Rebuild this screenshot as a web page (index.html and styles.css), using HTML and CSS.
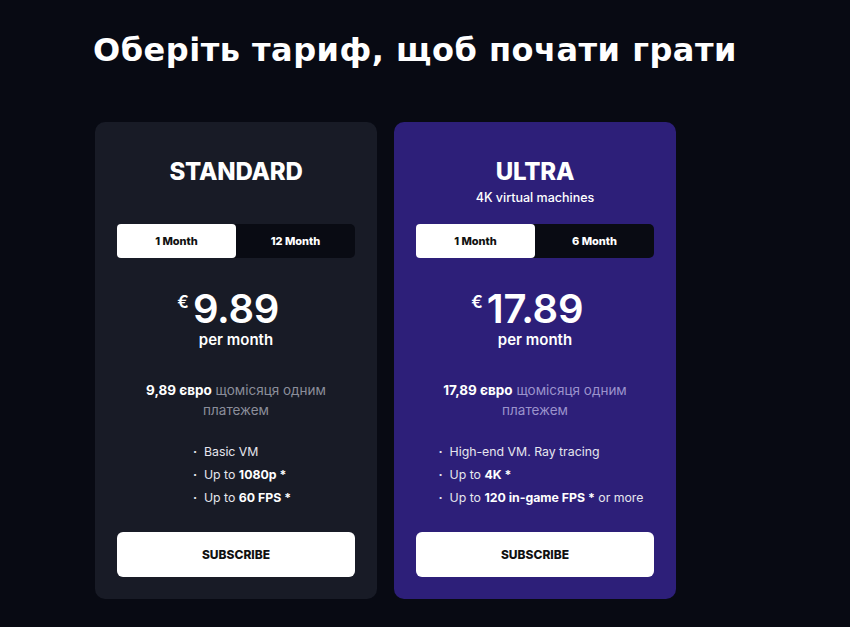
FILE: index.html
```html
<!DOCTYPE html>
<html lang="uk">
<head>
    <meta charset="UTF-8">
    <meta name="viewport" content="width=device-width, initial-scale=1.0">
    <title>Тарифи</title>
    <link rel="stylesheet" href="styles.css">
</head>
<body>
    <div class="page">
        <h1 class="page-title">Оберіть тариф, щоб почати грати</h1>

        <div class="plans">
            <div class="plan">
                <div class="plan-header">
                    <h2>STANDARD</h2>
                </div>

                <div class="period-toggle">
                    <button class="period active">1 Month</button>
                    <button class="period">12 Month</button>
                </div>

                <div class="price"><span class="amount"><span class="currency">€</span>9.89</span></div>
                <div class="price-unit">per month</div>

                <p class="price-note"><b>9,89 євро</b> щомісяця одним платежем</p>

                <ul class="features">
                    <li>Basic VM</li>
                    <li>Up to <b>1080p *</b></li>
                    <li>Up to <b>60 FPS *</b></li>
                </ul>

                <button class="subscribe-btn">SUBSCRIBE</button>
            </div>

            <div class="plan plan-ultra">
                <div class="plan-header">
                    <h2>ULTRA</h2>
                    <p>4K virtual machines</p>
                </div>

                <div class="period-toggle">
                    <button class="period active">1 Month</button>
                    <button class="period">6 Month</button>
                </div>

                <div class="price"><span class="amount"><span class="currency">€</span>17.89</span></div>
                <div class="price-unit">per month</div>

                <p class="price-note"><b>17,89 євро</b> щомісяця одним платежем</p>

                <ul class="features">
                    <li>High-end VM. Ray tracing</li>
                    <li>Up to <b>4K *</b></li>
                    <li>Up to <b>120 in-game FPS *</b> or more</li>
                </ul>

                <button class="subscribe-btn">SUBSCRIBE</button>
            </div>
        </div>
    </div>
</body>
</html>
```

FILE: styles.css
```css
* {
    margin: 0;
    padding: 0;
    box-sizing: border-box;
}

body {
    font-family: Inter, 'Noto Sans', sans-serif;
    background: #080a13;
    color: #fff;
    min-height: 100vh;
}

.page {
    padding: 30px 0 0 93px;
}

.page-title {
    font-family: 'DejaVu Sans', 'Noto Sans', sans-serif;
    font-size: 32px;
    font-weight: 700;
    line-height: 40px;
    letter-spacing: 0.5px;
    margin-bottom: 52px;
}

.plans {
    display: flex;
    gap: 17px;
    margin-left: 2px;
}

.plan {
    width: 282px;
    background: #181b26;
    border-radius: 10px;
    padding: 35px 22px 22px;
    text-align: center;
}

.plan-ultra {
    background: #2d1f79;
}

.plan-header {
    height: 48px;
    margin-bottom: 19px;
}

.plan-header h2 {
    font-size: 24px;
    font-weight: 800;
    line-height: 30px;
    letter-spacing: -0.2px;
}

.plan-header p {
    font-size: 12.5px;
    font-weight: 500;
    line-height: 18px;
    margin-top: 2px;
}

.period-toggle {
    display: flex;
    height: 34px;
    background: #090b13;
    border-radius: 5px;
}

.period {
    flex: 1;
    border: none;
    background: transparent;
    color: #fff;
    font-family: inherit;
    font-size: 11px;
    font-weight: 800;
    border-radius: 4px;
    cursor: pointer;
}

.period.active {
    background: #fff;
    color: #111;
}

.price {
    margin-top: 33px;
    font-size: 40px;
    font-weight: 600;
    line-height: 36px;
    letter-spacing: -0.3px;
}

.amount {
    position: relative;
}

/* знак валюти висить зліва від суми, сума по центру */
.currency {
    position: absolute;
    right: 100%;
    top: 10px;
    margin-right: 4px;
    font-size: 17px;
    line-height: 17px;
    letter-spacing: 0;
}

.price-unit {
    margin-top: 3px;
    font-size: 15px;
    font-weight: 600;
    line-height: 20px;
}

.price-note {
    margin: 30px auto 0;
    width: 200px;
    font-size: 13.5px;
    line-height: 20px;
    color: #8b8e9a;
}

.plan-ultra .price-note {
    color: #9b93cc;
}

.price-note b {
    color: #fff;
    font-weight: 700;
}

.features {
    list-style: none;
    display: inline-block;
    text-align: left;
    margin-top: 20px;
    padding-left: 12px;
    font-size: 12.3px;
    line-height: 23px;
    color: #e6e6ee;
}

.features li::before {
    content: "·";
    display: inline-block;
    width: 11px;
    font-weight: 700;
}

.features b {
    color: #fff;
    font-weight: 700;
}

.subscribe-btn {
    display: block;
    width: 100%;
    height: 45px;
    margin-top: 23px;
    border: none;
    border-radius: 6px;
    background: #fff;
    color: #111;
    font-family: inherit;
    font-size: 12px;
    font-weight: 800;
    cursor: pointer;
}
```
